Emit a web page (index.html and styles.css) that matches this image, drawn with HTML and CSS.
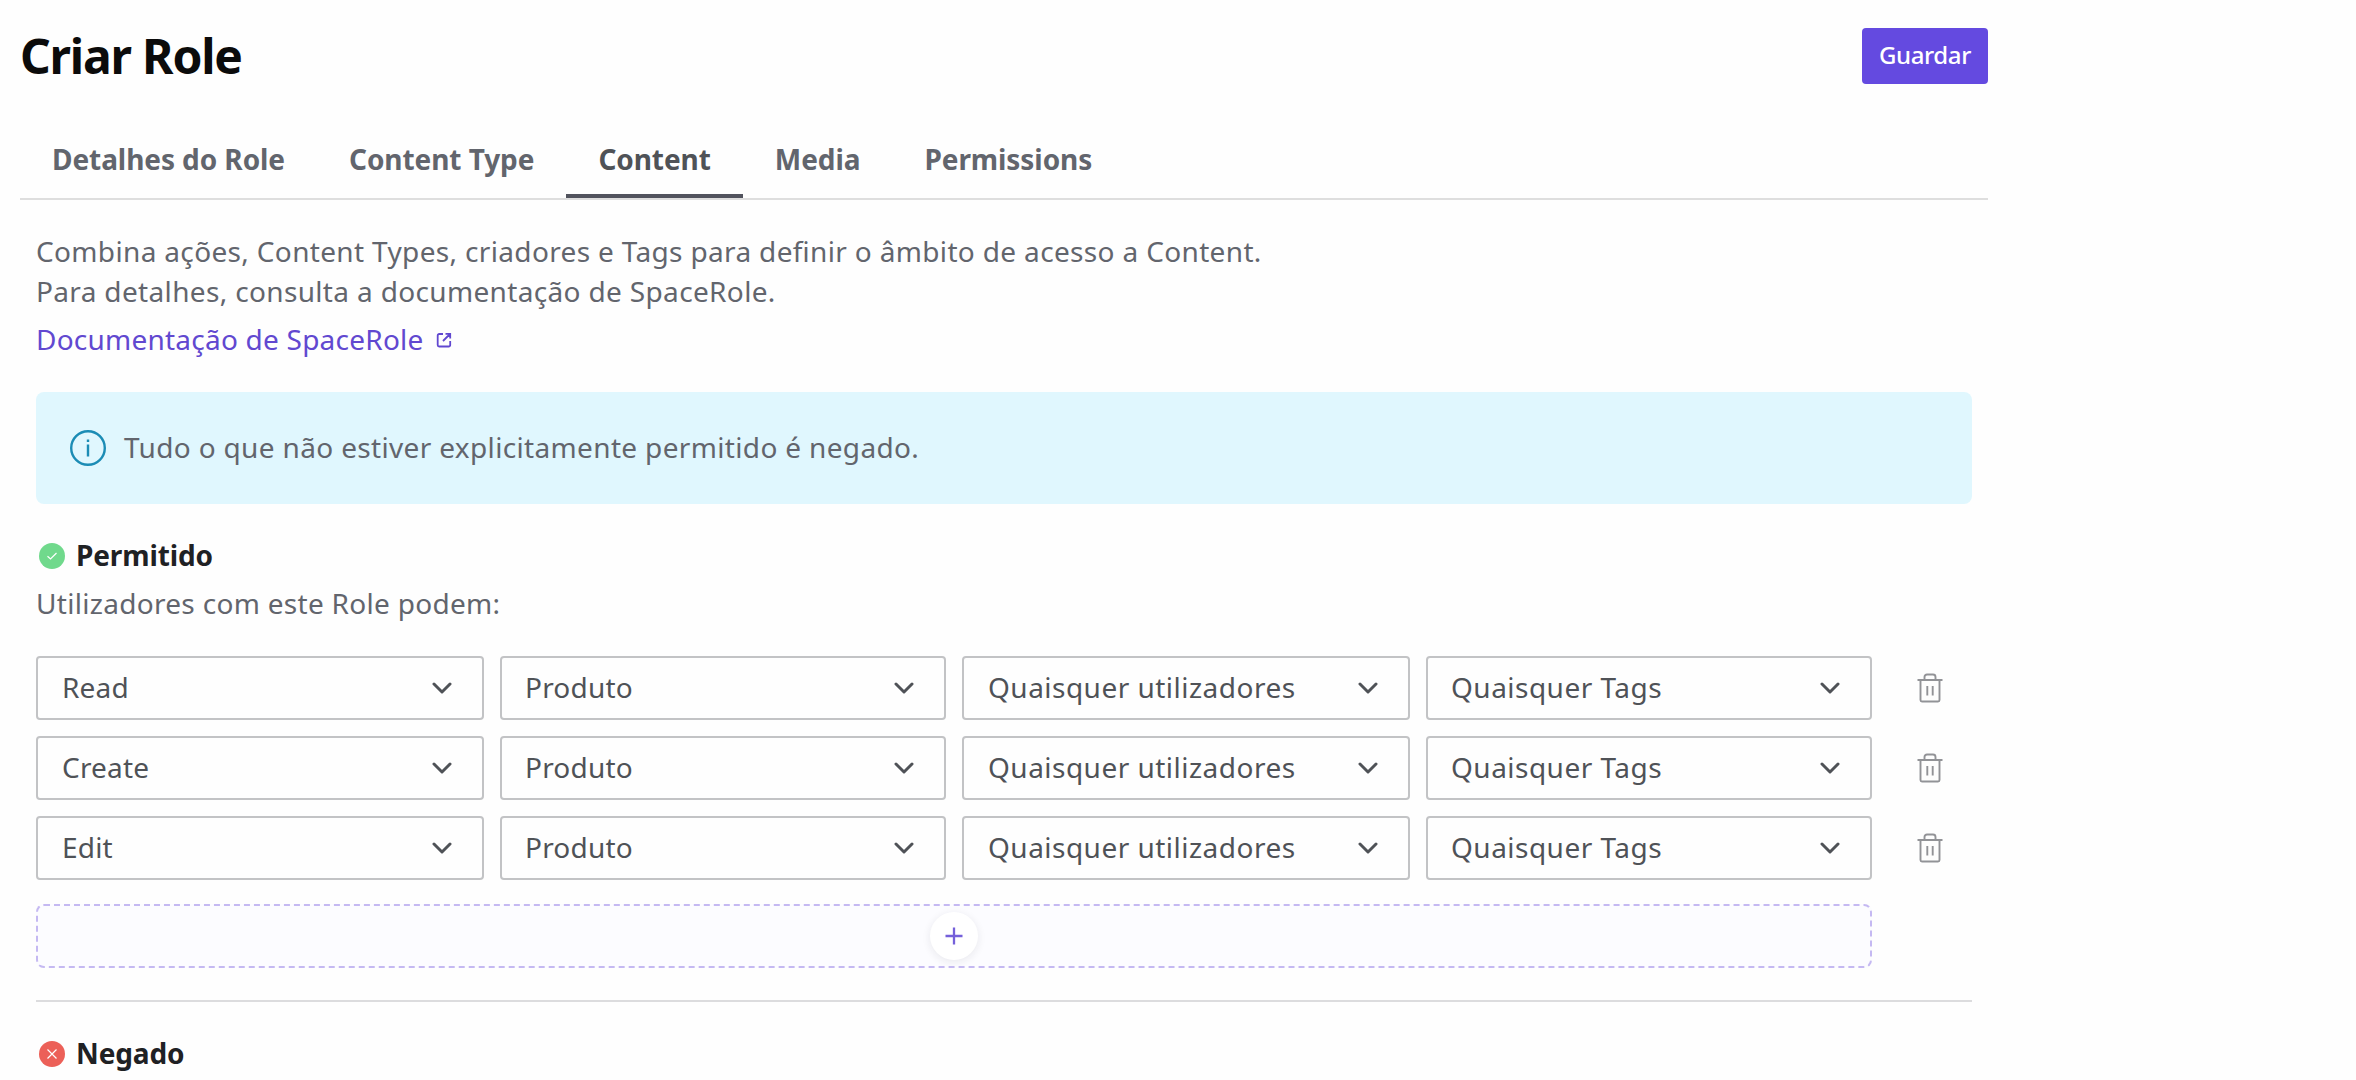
FILE: index.html
```html
<!DOCTYPE html>
<html lang="pt">
<head>
<meta charset="utf-8">
<title>Criar Role</title>
<link rel="stylesheet" href="styles.css">
</head>
<body>
<svg class="sprite" aria-hidden="true">
  <symbol id="chevron" viewBox="0 0 20 12"><path d="M2 2l8 8 8-8" fill="none" stroke="currentColor" stroke-width="3" stroke-linecap="round" stroke-linejoin="round"/></symbol>
  <symbol id="trash" viewBox="0 0 26 30"><path d="M0.500 7h25M3.500 7v20a1.500 1.500 0 0 0 1.500 1.500h16a1.500 1.500 0 0 0 1.500-1.500V7M7.500 7V4a2.500 2.500 0 0 1 2.500-2.500h6a2.500 2.500 0 0 1 2.500 2.500v3M10.300 13v9.500M15.700 13v9.500" fill="none" stroke="currentColor" stroke-width="1.900"/></symbol>
</svg>
<main class="page">
  <header class="header">
    <h1 class="title">Criar Role</h1>
    <button class="save">Guardar</button>
  </header>
  <nav class="tabs">
    <a class="tab">Detalhes do Role</a>
    <a class="tab">Content Type</a>
    <a class="tab tab-active">Content</a>
    <a class="tab">Media</a>
    <a class="tab">Permissions</a>
  </nav>
  <section class="panel">
    <p class="intro">Combina ações, Content Types, criadores e Tags para definir o âmbito de acesso a Content.<br>Para detalhes, consulta a documentação de SpaceRole.</p>
    <a class="doc-link"><span>Documentação de SpaceRole</span>
      <svg class="external" viewBox="0 0 16 16" fill="none" stroke="currentColor" stroke-width="1.8"><path d="M7 2H3.200A1.500 1.500 0 0 0 1.700 3.500v9.500a1.500 1.500 0 0 0 1.500 1.500h9.500a1.500 1.500 0 0 0 1.500-1.500V9M9.500 1.800h4.700v4.700M14 2L7 9"/></svg>
    </a>
    <div class="notice">
      <svg class="info" viewBox="0 0 36 36" fill="none" stroke="currentColor" stroke-width="2.4"><circle cx="18" cy="18" r="16.800"/><path d="M18 14.500v12M18 9.500v2.500"/></svg>
      <span class="notice-text">Tudo o que não estiver explicitamente permitido é negado.</span>
    </div>
    <h2 class="rule-title"><svg class="badge badge-allowed" viewBox="0 0 26 26"><circle cx="13" cy="13" r="13"/><path d="M8.500 13.300l3 2.700 6-6"/></svg>Permitido</h2>
    <p class="rule-text">Utilizadores com este Role podem:</p>
    <div class="rules">
      <div class="rule">
        <div class="select">Read<svg class="chevron"><use href="#chevron"/></svg></div>
        <div class="select select-even">Produto<svg class="chevron"><use href="#chevron"/></svg></div>
        <div class="select select-any">Quaisquer utilizadores<svg class="chevron"><use href="#chevron"/></svg></div>
        <div class="select select-any select-even">Quaisquer Tags<svg class="chevron"><use href="#chevron"/></svg></div>
        <svg class="trash"><use href="#trash"/></svg>
      </div>
      <div class="rule">
        <div class="select">Create<svg class="chevron"><use href="#chevron"/></svg></div>
        <div class="select select-even">Produto<svg class="chevron"><use href="#chevron"/></svg></div>
        <div class="select select-any">Quaisquer utilizadores<svg class="chevron"><use href="#chevron"/></svg></div>
        <div class="select select-any select-even">Quaisquer Tags<svg class="chevron"><use href="#chevron"/></svg></div>
        <svg class="trash"><use href="#trash"/></svg>
      </div>
      <div class="rule">
        <div class="select">Edit<svg class="chevron"><use href="#chevron"/></svg></div>
        <div class="select select-even">Produto<svg class="chevron"><use href="#chevron"/></svg></div>
        <div class="select select-any">Quaisquer utilizadores<svg class="chevron"><use href="#chevron"/></svg></div>
        <div class="select select-any select-even">Quaisquer Tags<svg class="chevron"><use href="#chevron"/></svg></div>
        <svg class="trash"><use href="#trash"/></svg>
      </div>
    </div>
    <div class="add"><span class="add-button"><svg class="plus" viewBox="0 0 18 18"><path d="M9 0.500v17M0.500 9h17" stroke="currentColor" stroke-width="2.300"/></svg></span></div>
    <hr class="divider">
    <h2 class="rule-title"><svg class="badge badge-denied" viewBox="0 0 26 26"><circle cx="13" cy="13" r="13"/><path d="M8.500 8.500l9 9M17.500 8.500l-9 9"/></svg>Negado</h2>
  </section>
</main>
</body>
</html>
```
FILE: styles.css
```css
* { box-sizing: border-box; }
body { margin: 0; height: 1080px; overflow: hidden; background: #fefefe; color: #62656d; font: 28px/40px "Noto Sans", sans-serif; font-feature-settings: "liga" 1; }
h1, h2, p { margin: 0; }
.sprite { display: none; }
.page { width: 1968px; margin-left: 20px; }
.header { display: flex; justify-content: space-between; align-items: center; height: 112px; }
.title { font-size: 48px; line-height: 64px; font-weight: 700; letter-spacing: -1.2px; color: #0b0b0b; }
.save { width: 126px; height: 56px; padding: 0 0 3px; border: 0; border-radius: 4px; background: #644ae0; color: #fff; font: 500 24px/50px "Noto Sans", sans-serif; letter-spacing: -0.4px; }
.tabs { display: flex; height: 88px; border-bottom: 2px solid #dedede; }
.tab { padding: 27px 32px 0; font-weight: 700; letter-spacing: -0.07px; }
.tab-active { color: #4f5257; border-bottom: 4px solid #51535d; }
.panel { padding: 31px 16px 0; }
.intro, .notice { letter-spacing: 0.345px; }
.doc-link { display: flex; align-items: center; gap: 12px; width: max-content; margin-top: 8px; color: #6148d0; letter-spacing: 0.23px; }
.external { width: 16px; height: 16px; margin-top: 2px; }
.notice { display: flex; align-items: center; gap: 18px; height: 112px; margin-top: 33px; padding-left: 34px; border-radius: 8px; background: #e0f7fe; }
.notice-text { padding-bottom: 2px; }
.info { width: 36px; height: 36px; color: #1b8cb5; }
.rule-title { display: flex; align-items: center; gap: 11px; margin-top: 31px; padding-left: 3px; font-size: 28px; font-weight: 700; letter-spacing: -0.12px; color: #1f2124; }
.badge { width: 26px; height: 28px; padding-top: 2px; fill: none; stroke: #fff; stroke-width: 1.2; }
.badge-allowed circle { fill: #70d98c; stroke: none; }
.badge-denied circle { fill: #ec6058; stroke: none; }
.rule-text { margin-top: 8px; letter-spacing: 0.3px; }
.rules { display: grid; gap: 16px; margin-top: 33px; }
.rule { display: grid; grid-template-columns: 448px 446px 448px 446px 84px; gap: 16px; align-items: center; }
.select { display: flex; align-items: center; justify-content: space-between; height: 64px; padding: 0 30px 2px 24px; border: 2px solid #c2c3c5; border-radius: 4px; color: #4f5257; letter-spacing: 0.2px; }
.select-even { padding-left: 23px; }
.select-any { letter-spacing: 0.48px; }
.chevron { width: 20px; height: 12px; margin-top: 1px; }
.trash { justify-self: center; width: 26px; height: 30px; color: #929397; }
.add { display: flex; align-items: center; justify-content: center; width: 1836px; height: 64px; margin-top: 24px; border: 2px dashed #c5b9f2; border-radius: 8px; background: #fcfcff; }
.add-button { display: flex; align-items: center; justify-content: center; width: 48px; height: 48px; border-radius: 50%; background: #fff; box-shadow: 0 2px 8px rgba(30, 30, 60, .09); color: #7560da; }
.plus { width: 18px; height: 18px; }
.divider { height: 2px; margin: 32px 0 0; border: 0; background: #dcdcde; }
```
